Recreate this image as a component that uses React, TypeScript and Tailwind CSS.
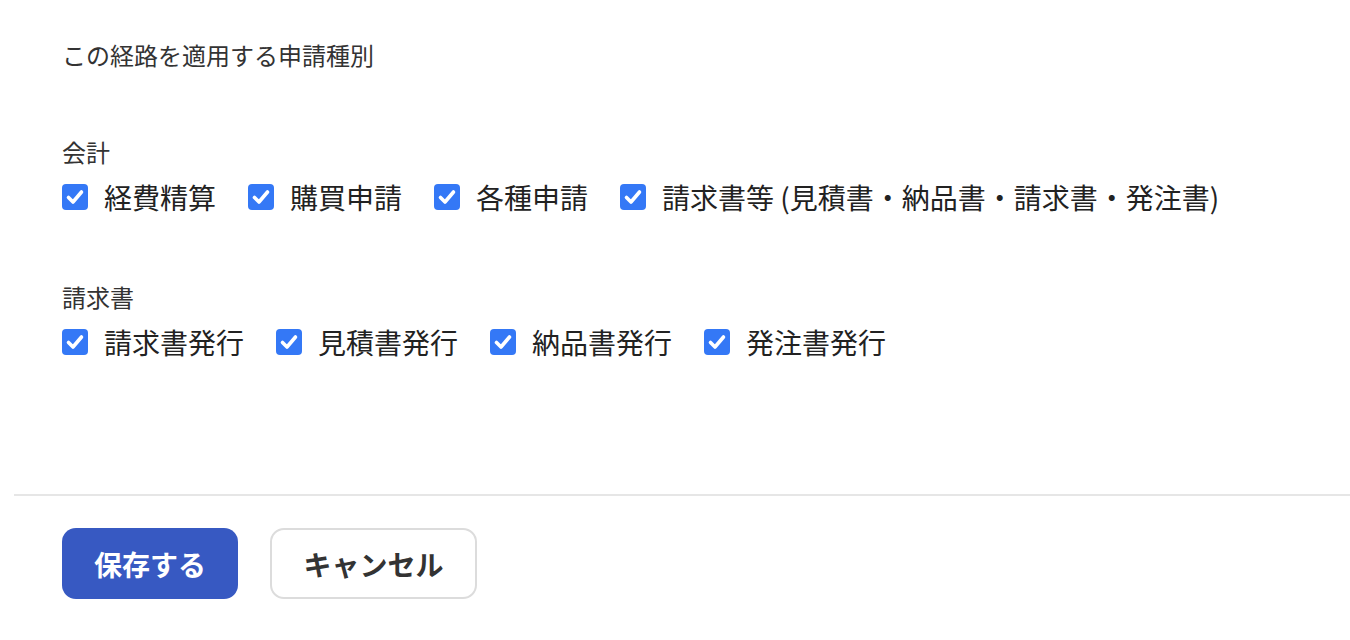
import React from 'react';

const font = { fontFamily: '"Noto Sans CJK JP", "Noto Sans", sans-serif' };

interface Group {
  name: string;
  items: string[];
}

const groups: Group[] = [
  {
    name: '会計',
    items: ['経費精算', '購買申請', '各種申請', '請求書等 (見積書・納品書・請求書・発注書)'],
  },
  {
    name: '請求書',
    items: ['請求書発行', '見積書発行', '納品書発行', '発注書発行'],
  },
];

function CheckBox() {
  return (
    <span className="flex h-[26px] w-[26px] shrink-0 items-center justify-center rounded-[4px] bg-[#3478f6]">
      <svg viewBox="0 0 26 26" className="h-[26px] w-[26px]" fill="none">
        <path d="M6.5 13.5l4.5 4.5L19.5 8" stroke="white" strokeWidth="3.6" strokeLinecap="round" strokeLinejoin="round" />
      </svg>
    </span>
  );
}

export default function App() {
  return (
    <div className="min-h-[640px] bg-white text-[#222]" style={font}>
      <div className="px-[62px] pt-[37px]">
        <p className="text-[24px] leading-[36px] text-[#333]">この経路を適用する申請種別</p>
        {groups.map((g, i) => (
          <div key={g.name} className={i === 0 ? 'mt-[61px]' : 'mt-[64px]'}>
            <p className="text-[24px] leading-[36px] text-[#333]">{g.name}</p>
            <div className="mt-[9px] flex items-center gap-[32px]">
              {g.items.map((item) => (
                <label key={item} className="flex h-[36px] items-center gap-[16px]">
                  <CheckBox />
                  <span className="text-[28px] leading-[36px] whitespace-nowrap">{item}</span>
                </label>
              ))}
            </div>
          </div>
        ))}
      </div>
      <div className="ml-[14px] mt-[134px] h-[2px] bg-[#e6e6e6]" />
      <div className="flex gap-[32px] px-[62px] pt-[32px]">
        <button className="h-[71px] w-[176px] rounded-[14px] bg-[#3759c2] text-[28px] font-bold text-white">
          保存する
        </button>
        <button className="h-[71px] w-[207px] rounded-[14px] border-2 border-[#dcdcdc] bg-white text-[28px] font-bold text-[#333]">
          キャンセル
        </button>
      </div>
    </div>
  );
}
